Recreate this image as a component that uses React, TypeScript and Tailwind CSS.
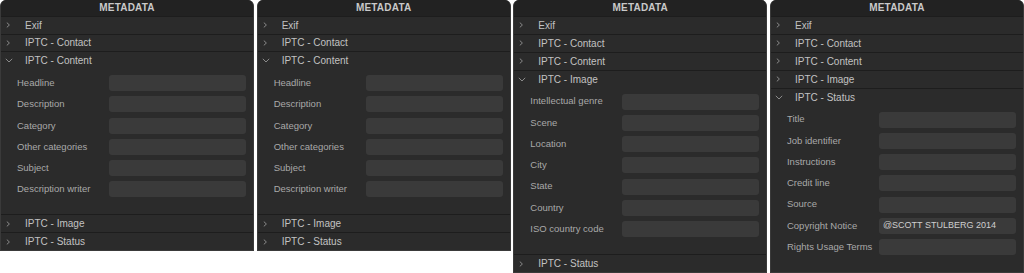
import React from 'react';

interface Field {
  label: string;
  value?: string;
}

interface Section {
  title: string;
  fields?: Field[];
}

const contentFields: Field[] = [
  { label: 'Headline' },
  { label: 'Description' },
  { label: 'Category' },
  { label: 'Other categories' },
  { label: 'Subject' },
  { label: 'Description writer' },
];

const imageFields: Field[] = [
  { label: 'Intellectual genre' },
  { label: 'Scene' },
  { label: 'Location' },
  { label: 'City' },
  { label: 'State' },
  { label: 'Country' },
  { label: 'ISO country code' },
];

const statusFields: Field[] = [
  { label: 'Title' },
  { label: 'Job identifier' },
  { label: 'Instructions' },
  { label: 'Credit line' },
  { label: 'Source' },
  { label: 'Copyright Notice', value: '@SCOTT STULBERG 2014' },
  { label: 'Rights Usage Terms' },
];

const Chevron: React.FC<{ open?: boolean }> = ({ open }) => (
  <span className="w-[24px] pl-[4px] flex items-center shrink-0">
    {open ? (
      <svg width="8" height="5" viewBox="0 0 8 5" fill="none">
        <path d="M0.8 0.8 L4 4 L7.2 0.8" stroke="#8a8a8a" strokeWidth="1" />
      </svg>
    ) : (
      <svg width="8" height="6" viewBox="0 0 8 6" fill="none">
        <path d="M1.8 0.6 L4.4 3 L1.8 5.4" stroke="#8a8a8a" strokeWidth="1" />
      </svg>
    )}
  </span>
);

const Row: React.FC<{ title: string; open?: boolean }> = ({ title, open }) => (
  <div className="h-[18px] border-t border-[#1d1d1d] flex items-center text-[10px] text-[#c2c2c2]">
    <Chevron open={open} />
    <span>{title}</span>
  </div>
);

const Fields: React.FC<{ fields: Field[] }> = ({ fields }) => (
  <div className="flex flex-col gap-[5.25px] pt-[6px] pb-[17px] pl-[16px] pr-[7px]">
    {fields.map((f) => (
      <div key={f.label} className="flex items-center h-4">
        <span className="w-[92px] text-[9.5px] text-[#a9a9a9] whitespace-nowrap">{f.label}</span>
        <div className="w-[137px] h-4 rounded-[3px] bg-[#3a3a3a] flex items-center pl-[4px] text-[9px] text-[#cfcfcf] whitespace-nowrap">
          {f.value}
        </div>
      </div>
    ))}
  </div>
);

const Panel: React.FC<{ sections: Section[]; tall?: boolean }> = ({ sections, tall }) => (
  <div
    className={`w-[254px] ${tall ? 'h-[273px]' : 'h-[251px]'} shrink-0 bg-[#2b2b2b] rounded-t-[6px] overflow-hidden flex flex-col border-x border-b border-[#3a3a3a]`}
  >
    <div className="h-[16px] bg-[#222222] flex items-center justify-center text-[10px] font-bold text-[#c9c9c9] tracking-[0.2px]">
      METADATA
    </div>
    {sections.map((s) => (
      <React.Fragment key={s.title}>
        <Row title={s.title} open={!!s.fields} />
        {s.fields && <Fields fields={s.fields} />}
      </React.Fragment>
    ))}
  </div>
);

const App: React.FC = () => {
  return (
    <div
      className="w-[1024px] h-[273px] bg-white flex justify-between items-start overflow-hidden"
      style={{ fontFamily: '"Liberation Sans", Arial, sans-serif' }}
    >
      <Panel
        sections={[
          { title: 'Exif' },
          { title: 'IPTC - Contact' },
          { title: 'IPTC - Content', fields: contentFields },
          { title: 'IPTC - Image' },
          { title: 'IPTC - Status' },
        ]}
      />
      <Panel
        sections={[
          { title: 'Exif' },
          { title: 'IPTC - Contact' },
          { title: 'IPTC - Content', fields: contentFields },
          { title: 'IPTC - Image' },
          { title: 'IPTC - Status' },
        ]}
      />
      <Panel
        tall
        sections={[
          { title: 'Exif' },
          { title: 'IPTC - Contact' },
          { title: 'IPTC - Content' },
          { title: 'IPTC - Image', fields: imageFields },
          { title: 'IPTC - Status' },
        ]}
      />
      <Panel
        tall
        sections={[
          { title: 'Exif' },
          { title: 'IPTC - Contact' },
          { title: 'IPTC - Content' },
          { title: 'IPTC - Image' },
          { title: 'IPTC - Status', fields: statusFields },
        ]}
      />
    </div>
  );
};

export default App;
